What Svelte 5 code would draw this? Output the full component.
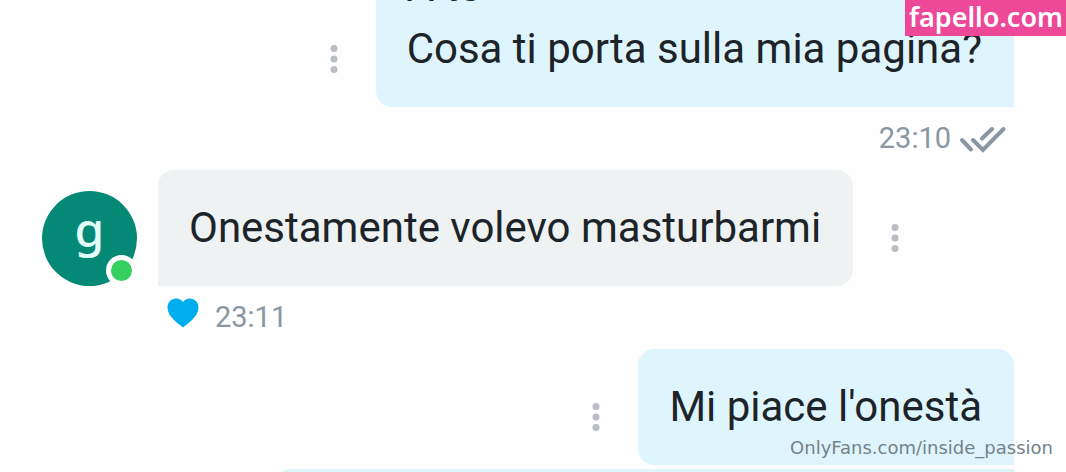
<script lang="ts">
	interface Message {
		id: number;
		mine: boolean;
		lines: string[];
		time?: string;
		liked?: boolean;
	}

	const messages: Message[] = [
		{ id: 1, mine: true, lines: ['A te', 'Cosa ti porta sulla mia pagina?'], time: '23:10' },
		{ id: 2, mine: false, lines: ['Onestamente volevo masturbarmi'], time: '23:11', liked: true },
		{ id: 3, mine: true, lines: ["Mi piace l'onestà"] }
	];
</script>

<main class="chat">
	{#each messages as message (message.id)}
		<article class="message" class:mine={message.mine} class:first={message.id === 1}>
			<div class="row">
				{#if !message.mine}
					<div class="avatar">
						g
						<span class="online"></span>
					</div>
				{/if}
				<div class="bubble">
					{#each message.lines as line}
						<p>{line}</p>
					{/each}
				</div>
				<button class="more" aria-label="More">
					<svg viewBox="0 0 8 28" width="8" height="28">
						<circle cx="4" cy="3.5" r="3.5" />
						<circle cx="4" cy="14" r="3.5" />
						<circle cx="4" cy="24.5" r="3.5" />
					</svg>
				</button>
			</div>
			{#if message.time}
				<div class="meta">
					{#if message.liked}
						<button class="like" aria-label="Like">
							<svg viewBox="0 0 32 30" width="32" height="30">
								<path d="M16 29.500C12 26 0.500 19 0.500 9.500C0.500 4 4.500 0.500 9 0.500C12 0.500 14.500 1.800 16 4C17.500 1.800 20 0.500 23 0.500C27.500 0.500 31.500 4 31.500 9.500C31.500 19 20 26 16 29.500Z" />
							</svg>
						</button>
					{/if}
					<time>{message.time}</time>
					{#if message.mine}
						<svg class="read" viewBox="0 0 48 28" width="48" height="28">
							<path d="M3 15L12 24.500M14 15L24 25L44.500 4M23 13.500L33 4" />
						</svg>
					{/if}
				</div>
			{/if}
		</article>
	{/each}
	<div class="next"></div>
	<a class="site" href="#site">fapello.com</a>
	<span class="credit">OnlyFans.com/inside_passion</span>
</main>

<style>
	:global(body) {
		background: #fefefe;
	}

	.chat {
		position: relative;
		overflow: hidden;
		display: flex;
		flex-direction: column;
		padding: 0 52px 0 42px;
		font-family: Roboto, sans-serif;
		color: #1d2429;
	}

	.row {
		display: flex;
		align-items: flex-end;
	}

	.mine .row {
		flex-direction: row-reverse;
	}

	.bubble {
		padding: 27px 32px 27px 31px;
		border-radius: 16px 16px 16px 0;
		background: #eef2f3;
	}

	.mine .bubble {
		border-radius: 16px 16px 0 16px;
		background: #dff5fd;
	}

	/* the oldest message is scrolled partly out of view */
	.first {
		margin-top: -71px;
	}

	.bubble p {
		margin: 0;
		font-size: 42px;
		line-height: 62px;
	}

	/* top edge of the following message */
	.next {
		align-self: flex-end;
		width: 76%;
		height: 16px;
		margin: 4px 0 -13px;
		border-radius: 16px 0 0 0;
		background: #dff5f9;
	}

	button {
		display: flex;
		padding: 0;
		border: 0;
		background: none;
		cursor: pointer;
	}

	.more {
		margin: 0 38px 34px;
		fill: #b9bdc6;
	}

	.avatar {
		position: relative;
		width: 95px;
		height: 95px;
		margin-right: 21px;
		border-radius: 50%;
		background: #048977;
		color: #e4fdf8;
		font: 600 48px/76px 'Noto Sans', sans-serif;
		font-weight: 500;
		text-align: center;
	}

	.online {
		position: absolute;
		right: 0;
		bottom: 0;
		width: 21px;
		height: 21px;
		border: 5px solid #fefefe;
		border-radius: 50%;
		background: #35d060;
	}

	.meta {
		display: flex;
		align-items: center;
		box-sizing: border-box;
		height: 63px;
		padding: 0 0 2px 125px;
		color: #8a96a3;
		font-size: 29px;
	}

	.mine .meta {
		justify-content: flex-end;
		padding: 0 7px 2px 0;
	}

	.like {
		margin: 0 16px 8px 0;
		fill: #00aeef;
	}

	.read {
		margin: 2px 0 0 8px;
		fill: none;
		stroke: #8a96a3;
		stroke-width: 4;
		stroke-linecap: round;
	}

	.site {
		position: absolute;
		top: 0;
		right: 0;
		padding: 0 3px 2px 4px;
		background: #ee4899;
		color: #fff;
		font: 600 27px/34px 'Noto Sans', sans-serif;
		text-decoration: none;
	}

	.credit {
		position: absolute;
		right: 13px;
		bottom: 12px;
		color: #748388;
		font: 18px/24px 'DejaVu Sans', sans-serif;
	}
</style>
